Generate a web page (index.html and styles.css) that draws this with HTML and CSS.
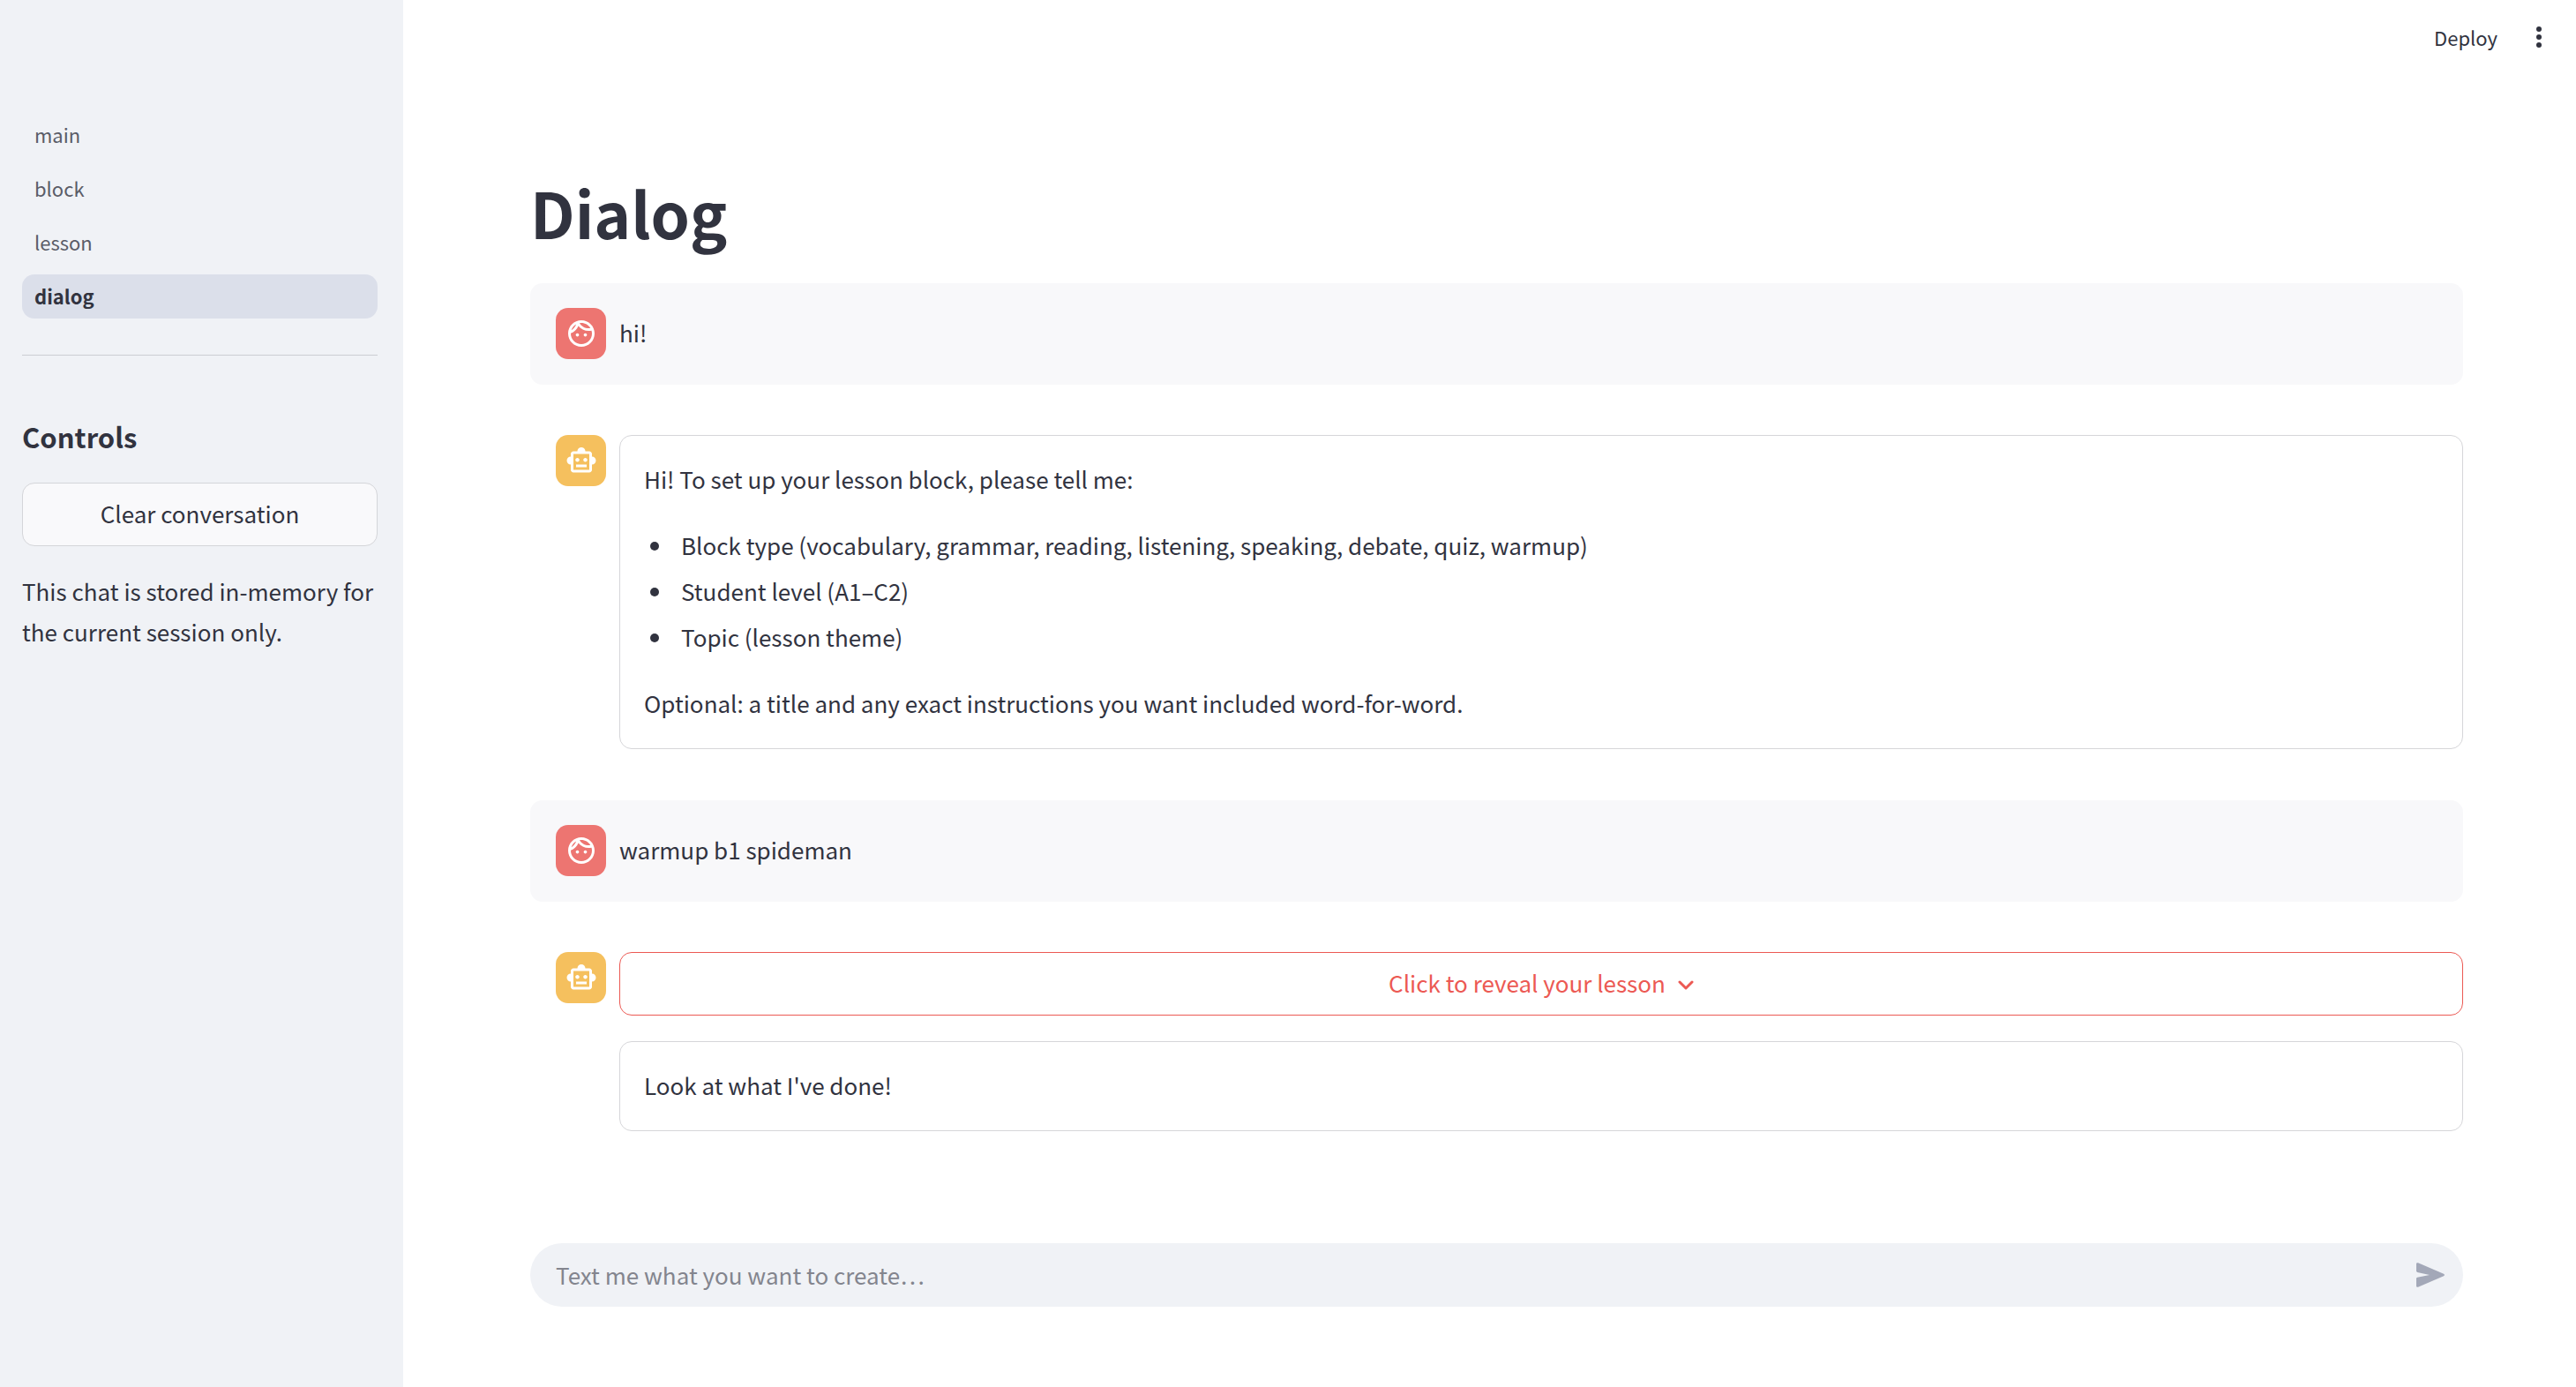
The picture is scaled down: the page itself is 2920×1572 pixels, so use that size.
FILE: index.html
```html
<!DOCTYPE html>
<html lang="en">
<head>
<meta charset="utf-8">
<title>Dialog</title>
<link rel="stylesheet" href="styles.css">
</head>
<body>
<svg class="sprite" aria-hidden="true">
  <symbol id="face" viewBox="0 0 24 24"><path d="M10.25 13c0 .69-.56 1.25-1.25 1.25S7.75 13.69 7.75 13s.56-1.25 1.25-1.25 1.25.56 1.25 1.25zM15 11.75c-.69 0-1.25.56-1.25 1.25s.56 1.25 1.25 1.25 1.25-.56 1.25-1.25-.56-1.25-1.25-1.25zm7 .25c0 5.52-4.48 10-10 10S2 17.52 2 12 6.48 2 12 2s10 4.48 10 10zM10.66 4.12C12.06 6.44 14.6 8 17.5 8c.46 0 .91-.05 1.34-.12C17.44 5.56 14.9 4 12 4c-.46 0-.91.05-1.34.12zM4.42 9.47c1.71-.97 3.03-2.55 3.66-4.44C6.37 6 5.05 7.58 4.42 9.47zM20 12c0-.78-.12-1.53-.33-2.24-.7.15-1.42.24-2.17.24-3.13 0-5.92-1.44-7.76-3.69C8.69 8.87 6.6 10.88 4 11.86c.01.04 0 .09 0 .14 0 4.41 3.59 8 8 8s8-3.59 8-8z"/></symbol>
  <symbol id="robot" viewBox="0 0 24 24"><path d="M20 9V7c0-1.1-.9-2-2-2h-3c0-1.66-1.34-3-3-3S9 3.34 9 5H6c-1.1 0-2 .9-2 2v2c-1.66 0-3 1.34-3 3s1.34 3 3 3v4c0 1.1.9 2 2 2h12c1.1 0 2-.9 2-2v-4c1.66 0 3-1.34 3-3s-1.34-3-3-3zm-2 10H6V7h12v12zm-9-6c-.83 0-1.5-.67-1.5-1.5S8.17 10 9 10s1.5.67 1.5 1.5S9.83 13 9 13zm7.5-1.5c0 .83-.67 1.5-1.5 1.5s-1.5-.67-1.5-1.5.67-1.5 1.5-1.5 1.5.67 1.5 1.5zM8 15h8v2H8v-2z"/></symbol>
</svg>
<div class="app">
  <aside class="sidebar">
    <nav class="nav" aria-label="Pages">
      <a href="#main">main</a>
      <a href="#block">block</a>
      <a href="#lesson">lesson</a>
      <a href="#dialog" class="active" aria-current="page">dialog</a>
    </nav>
    <hr class="rule">
    <h2 class="side-title">Controls</h2>
    <button type="button" class="btn btn-clear">Clear conversation</button>
    <p class="side-note">This chat is stored in-memory for the current session only.</p>
  </aside>
  <div class="page">
    <header class="toolbar">
      <button type="button" class="tool">Deploy</button>
      <button type="button" class="tool" aria-label="Menu"><svg width="8" height="24" viewBox="0 0 8 24"><circle cx="4" cy="3" r="3"/><circle cx="4" cy="12" r="3"/><circle cx="4" cy="21" r="3"/></svg></button>
    </header>
    <main class="content">
      <h1 class="title">Dialog</h1>
      <div class="chat">
        <article class="message user">
          <span class="avatar"><svg><use href="#face"/></svg></span>
          <p class="said">hi!</p>
        </article>
        <article class="message bot">
          <span class="avatar"><svg><use href="#robot"/></svg></span>
          <div class="reply">
            <div class="card">
              <p>Hi! To set up your lesson block, please tell me:</p>
              <ul>
                <li>Block type (vocabulary, grammar, reading, listening, speaking, debate, quiz, warmup)</li>
                <li>Student level (A1–C2)</li>
                <li>Topic (lesson theme)</li>
              </ul>
              <p>Optional: a title and any exact instructions you want included word-for-word.</p>
            </div>
          </div>
        </article>
        <article class="message user">
          <span class="avatar"><svg><use href="#face"/></svg></span>
          <p class="said">warmup b1 spideman</p>
        </article>
        <article class="message bot">
          <span class="avatar"><svg><use href="#robot"/></svg></span>
          <div class="reply">
            <button type="button" class="btn btn-reveal">Click to reveal your lesson
              <svg width="18" height="18" viewBox="0 0 18 18"><path d="M2 8l7 7 7-7"/></svg>
            </button>
            <div class="card"><p>Look at what I've done!</p></div>
          </div>
        </article>
      </div>
      <form class="composer">
        <input type="text" aria-label="Message" placeholder="Text me what you want to create…">
        <button type="button" class="send" aria-label="Send"><svg width="32" height="28" viewBox="0 0 32 28"><path d="M0 1.6C0 .4 1 0 2 .3L31 12.8c1.200.6 1.200 1.900 0 2.400L2 27.700C1 28 0 27.500 0 26.400V18.200c0-.8.5-1.200 1.200-1.400L15 14 1.200 10.900C.5 10.700 0 10.300 0 9.600z"/></svg></button>
      </form>
    </main>
  </div>
</div>
</body>
</html>
```
FILE: styles.css
```css
* { box-sizing: border-box; }

body, h1, h2, p, ul { margin: 0; }

body {
  background: #fff;
  color: #31333f;
  font: 400 26px/46px "Noto Sans CJK SC", sans-serif;
}

button, input { font: inherit; color: inherit; }
button { border: 0; background: none; padding: 0; cursor: pointer; }
svg { display: block; flex: none; fill: currentColor; }

.sprite { position: absolute; width: 0; height: 0; }

.app { display: flex; min-height: 100vh; }

/* Sidebar */
.sidebar {
  flex: none;
  width: 457px;
  padding: 128px 29px 28px 25px;
  background: #f0f2f6;
}

.nav { display: flex; flex-direction: column; gap: 11px; }
.nav a {
  padding: 0 14px 2px;
  border-radius: 14px;
  color: #5a5c67;
  font-size: 22px;
  line-height: 48px;
  text-decoration: none;
}
.nav a.active { background: #dbdfea; color: #31333f; font-weight: 700; }

.rule { height: 1px; margin: 41px 0 69px; border: 0; background: #cbcdd3; }

.side-title { margin-bottom: 29px; font-size: 31px; line-height: 46px; }

.btn {
  display: flex;
  align-items: center;
  justify-content: center;
  width: 100%;
  height: 72px;
  padding-bottom: 2px;
  border: 1px solid #d4d5d9;
  border-radius: 14px;
}
.btn-clear { background: #f9f9fb; }
.side-note { margin-top: 28px; }

/* Page */
.page { flex: 1; min-width: 0; display: flex; flex-direction: column; }

.toolbar {
  display: flex;
  align-items: center;
  justify-content: flex-end;
  gap: 43px;
  height: 83px;
  padding-right: 38px;
}
.tool { font-size: 22px; line-height: 46px; }

.content {
  flex: 1;
  display: flex;
  flex-direction: column;
  padding: 110px 128px 91px 144px;
}

.title { margin-bottom: 33px; font-size: 71px; font-weight: 700; line-height: 95px; }

.chat { display: flex; flex-direction: column; gap: 29px; margin-bottom: 28px; }

.message { display: flex; gap: 15px; padding: 28px 0 29px 29px; border-radius: 14px; }
.message.user { background: #f8f8fa; }

.avatar {
  flex: none;
  display: grid;
  place-items: center;
  width: 57px;
  height: 58px;
  border-radius: 14px;
  color: #fff;
}
.avatar svg { width: 36px; height: 36px; }
.user .avatar { background: #ed7571; }
.bot .avatar { background: #f5c05e; }

.said { line-height: 56px; }

.reply { flex: 1; min-width: 0; display: flex; flex-direction: column; gap: 29px; }

.card {
  display: flex;
  flex-direction: column;
  gap: 26px;
  padding: 26px 27px 28px;
  border: 1px solid #d6d6d9;
  border-radius: 14px;
}
.card ul { padding-left: 34px; }
.card li { padding-left: 8px; line-height: 52px; }

.btn-reveal { gap: 14px; border-color: #ec5953; color: #ec5953; }
.btn-reveal svg { fill: none; stroke: currentColor; stroke-width: 3; stroke-linecap: round; stroke-linejoin: round; }

.composer {
  display: flex;
  align-items: center;
  height: 72px;
  margin-top: auto;
  padding: 0 21px 0 29px;
  border-radius: 36px;
  background: #f0f2f6;
}
.composer input { flex: 1; min-width: 0; height: 48px; padding: 0 0 2px; border: 0; outline: 0; background: none; }
.composer input::placeholder { color: #83858e; opacity: 1; }
.send { color: #a3a8b8; }
```
